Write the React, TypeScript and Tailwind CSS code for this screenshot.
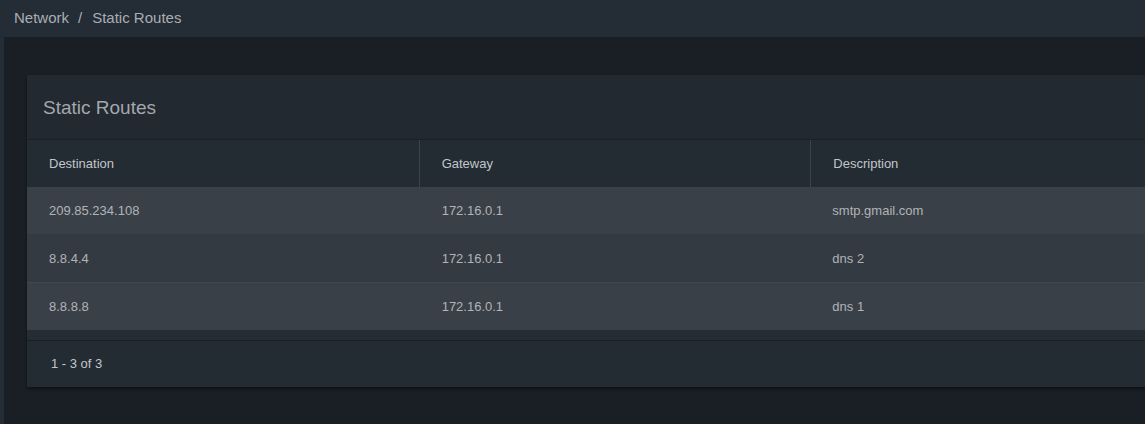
import React from "react";

const routes = [
  { destination: "209.85.234.108", gateway: "172.16.0.1", description: "smtp.gmail.com" },
  { destination: "8.8.4.4", gateway: "172.16.0.1", description: "dns 2" },
  { destination: "8.8.8.8", gateway: "172.16.0.1", description: "dns 1" },
];

const columns = ["Destination", "Gateway", "Description"];

export default function App() {
  return (
    <div
      className="w-[1145px] h-[424px] overflow-hidden flex flex-col bg-[#1a1f26]"
      style={{ fontFamily: '"Liberation Sans", Arial, sans-serif' }}
    >
      {/* Breadcrumb bar */}
      <div className="h-[37px] shrink-0 bg-[#242c35] flex items-center px-[14px] text-[15px] text-[#a9aeb3]">
        <span>Network</span>
        <span className="ml-[9px] mr-[10px]">/</span>
        <span>Static Routes</span>
      </div>

      <div className="flex flex-1 min-h-0">
        <div className="w-[4px] shrink-0 bg-[#242c35]" />
        <div className="flex-1 overflow-hidden pt-[38px] pl-[23px]">
          {/* Card */}
          <div className="w-[1175px] bg-[#222930] shadow-[0_2px_3px_rgba(0,0,0,0.45)]">
            <div className="h-[65px] flex items-center px-[16px] pt-[2px] border-b border-[#1b2027]">
              <h2 className="text-[19px] text-[#a3a8ad]">Static Routes</h2>
            </div>

            {/* Table header */}
            <div className="grid grid-cols-3 h-[47px] bg-[#232b33] text-[13px] text-[#c2c6ca]">
              {columns.map((col, i) => (
                <div
                  key={col}
                  className={`flex items-center px-[22px] ${i > 0 ? "border-l border-[#3a424a]" : ""}`}
                >
                  {col}
                </div>
              ))}
            </div>

            {/* Rows */}
            <div className="text-[13px] text-[#b0b4b8]">
              {routes.map((r, i) => (
                <div
                  key={r.destination}
                  className={`grid grid-cols-3 border-t ${i === 0 ? "h-[47px]" : "h-[48px]"} ${
                    i % 2 === 0 ? "bg-[#3a4047] border-[#3a4047]" : "bg-[#343a41] border-[#343a41]"
                  } ${i === 2 ? "border-[#41474e]" : ""}`}
                >
                  <div className="flex items-center px-[22px]">{r.destination}</div>
                  <div className="flex items-center px-[23px]">{r.gateway}</div>
                  <div className="flex items-center px-[22px]">{r.description}</div>
                </div>
              ))}
            </div>

            <div className="h-[10px] bg-[#252c34]" />

            {/* Footer */}
            <div className="h-[47px] flex items-center px-[24px] border-t border-[#1b2027] bg-[#232b33] text-[13px] text-[#c2c6ca]">
              1 - 3 of 3
            </div>
          </div>
        </div>
      </div>
    </div>
  );
}
